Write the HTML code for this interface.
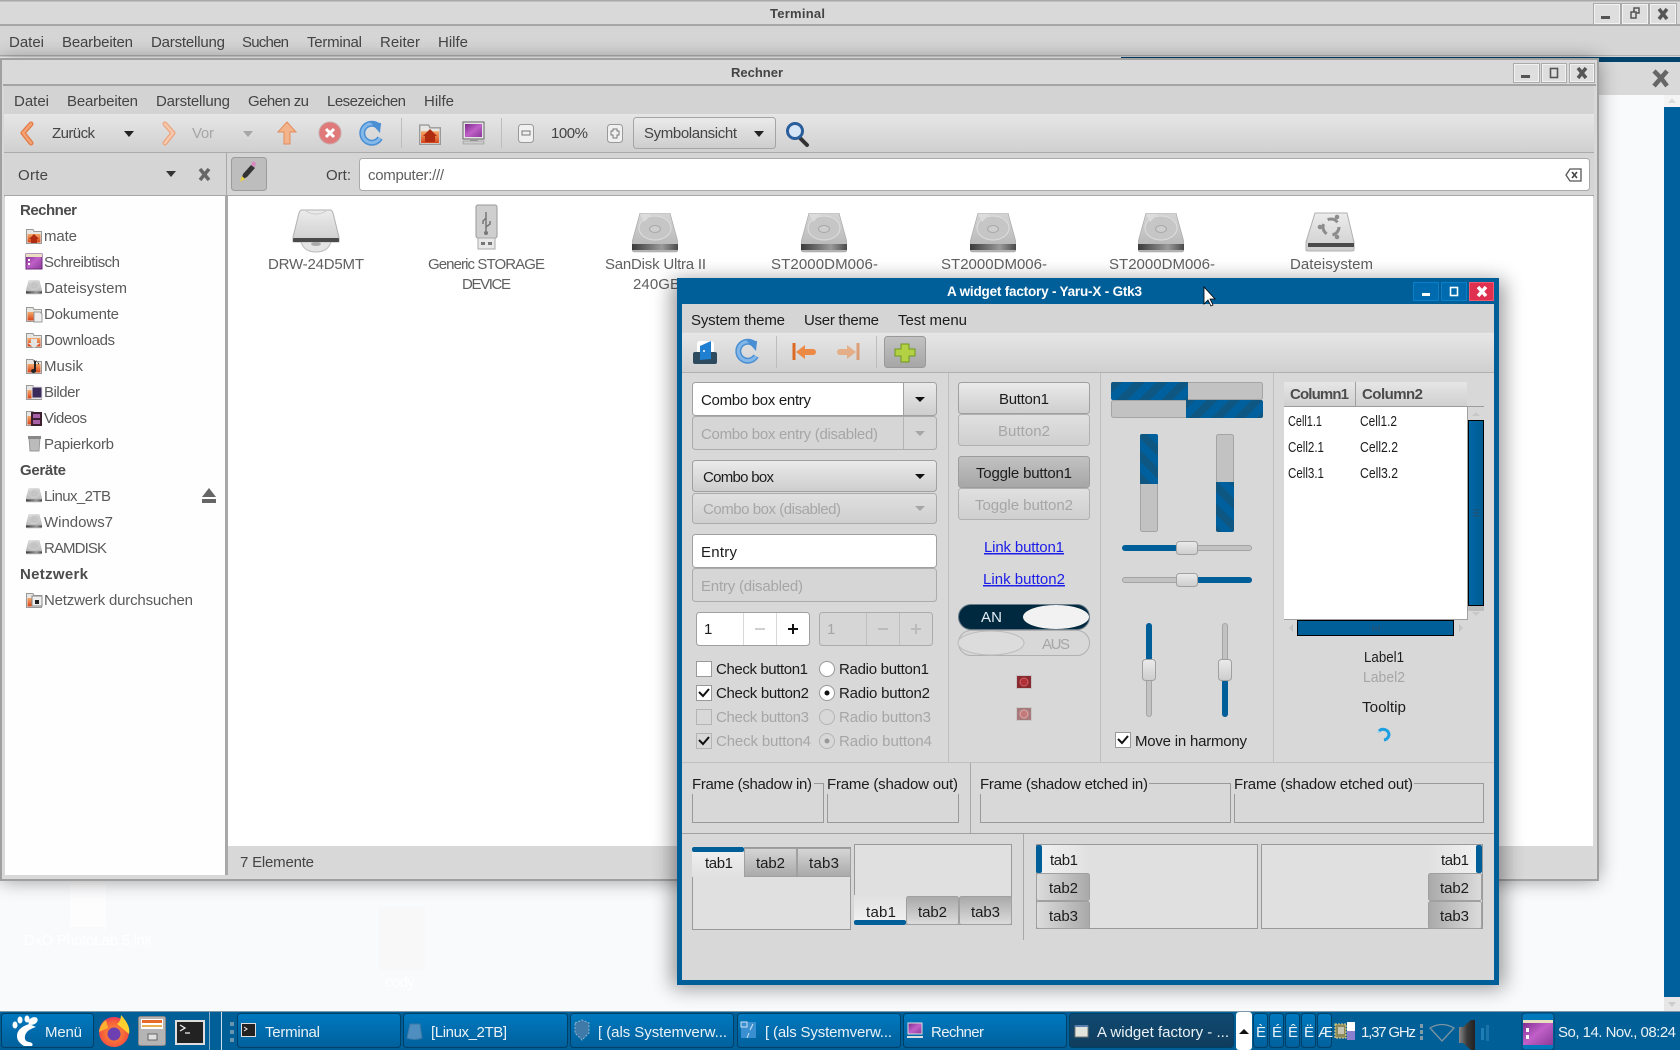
<!DOCTYPE html>
<html lang="de"><head><meta charset="utf-8"><title>A widget factory</title>
<style>
html,body{margin:0;padding:0;width:1680px;height:1050px;overflow:hidden;background:#f9fafc}
svg{display:block}
text{font-family:"Liberation Sans",sans-serif;font-size:15px;fill:#1c1c1c}
.g{fill:#444}.s{fill:#5a5a5a}.b{font-weight:bold;fill:#4c4c4c}.l{fill:#606060}
.d{fill:#a6a6a6}.t{font-weight:bold;font-size:13px;fill:#444}.w{fill:#eaf2f7}
.c{stroke:#a4a4a4;fill:none}
</style></head><body>
<svg xmlns="http://www.w3.org/2000/svg" width="1680" height="1050" viewBox="0 0 1680 1050">
<defs>
<linearGradient id="tb" x1="0" y1="0" x2="0" y2="1"><stop offset="0" stop-color="#e6e6e6"/><stop offset="1" stop-color="#d0d0d0"/></linearGradient>
<linearGradient id="bt" x1="0" y1="0" x2="0" y2="1"><stop offset="0" stop-color="#ebebeb"/><stop offset="1" stop-color="#cdcdcd"/></linearGradient>
<linearGradient id="dbt" x1="0" y1="0" x2="0" y2="1"><stop offset="0" stop-color="#e0e0e0"/><stop offset="1" stop-color="#cfcfcf"/></linearGradient>
<linearGradient id="tg" x1="0" y1="0" x2="0" y2="1"><stop offset="0" stop-color="#c2c2c2"/><stop offset="1" stop-color="#a6a6a6"/></linearGradient>
<linearGradient id="tab" x1="0" y1="0" x2="0" y2="1"><stop offset="0" stop-color="#d6d6d6"/><stop offset="1" stop-color="#a9a9a9"/></linearGradient>
<linearGradient id="tab2" x1="0" y1="0" x2="0" y2="1"><stop offset="0" stop-color="#a9a9a9"/><stop offset="1" stop-color="#dcdcdc"/></linearGradient>
<linearGradient id="tabl" x1="0" y1="0" x2="1" y2="0"><stop offset="0" stop-color="#dcdcdc"/><stop offset="1" stop-color="#a9a9a9"/></linearGradient>
<linearGradient id="tabr" x1="0" y1="0" x2="1" y2="0"><stop offset="0" stop-color="#a9a9a9"/><stop offset="1" stop-color="#dcdcdc"/></linearGradient>
<linearGradient id="act" x1="0" y1="0" x2="0" y2="1"><stop offset="0" stop-color="#f2f2f2"/><stop offset="1" stop-color="#e0e0e0"/></linearGradient>
<linearGradient id="actb" x1="0" y1="0" x2="0" y2="1"><stop offset="0" stop-color="#e0e0e0"/><stop offset="1" stop-color="#f2f2f2"/></linearGradient>
<linearGradient id="actl" x1="0" y1="0" x2="1" y2="0"><stop offset="0" stop-color="#f2f2f2"/><stop offset="1" stop-color="#e0e0e0"/></linearGradient>
<linearGradient id="actr" x1="0" y1="0" x2="1" y2="0"><stop offset="0" stop-color="#e0e0e0"/><stop offset="1" stop-color="#f2f2f2"/></linearGradient>
<linearGradient id="task" x1="0" y1="0" x2="0" y2="1"><stop offset="0" stop-color="#0079bf"/><stop offset="1" stop-color="#00609c"/></linearGradient>
<linearGradient id="taskd" x1="0" y1="0" x2="0" y2="1"><stop offset="0" stop-color="#114a72"/><stop offset="1" stop-color="#0f3c5c"/></linearGradient>
<linearGradient id="hd" x1="0" y1="0" x2="0" y2="1"><stop offset="0" stop-color="#d4d4d4"/><stop offset="1" stop-color="#b4b4b4"/></linearGradient>
<linearGradient id="hl" x1="0" y1="0" x2="0" y2="1"><stop offset="0" stop-color="#ececec"/><stop offset="1" stop-color="#cecece"/></linearGradient>
<linearGradient id="bar" x1="0" y1="0" x2="1" y2="0"><stop offset="0" stop-color="#3a3a3a"/><stop offset=".65" stop-color="#9a9a9a"/><stop offset="1" stop-color="#4a4a4a"/></linearGradient>
<linearGradient id="fo" x1="0" y1="0" x2="0" y2="1"><stop offset="0" stop-color="#f4a86a"/><stop offset="1" stop-color="#d8451a"/></linearGradient>
<linearGradient id="pu" x1="0" y1="0" x2="1" y2="1"><stop offset="0" stop-color="#7a2a8a"/><stop offset=".5" stop-color="#c060c8"/><stop offset="1" stop-color="#8a3a98"/></linearGradient>
<linearGradient id="bl" x1="0" y1="0" x2="1" y2="0"><stop offset="0" stop-color="#0067a8"/><stop offset="1" stop-color="#005c90"/></linearGradient>
<linearGradient id="sp" x1="0" y1="0" x2="1" y2="0"><stop offset="0" stop-color="#888"/><stop offset=".5" stop-color="#3a3a3a"/><stop offset="1" stop-color="#222"/></linearGradient>
<radialGradient id="ff" cx=".5" cy=".55" r=".6"><stop offset="0" stop-color="#ff9a30"/><stop offset=".7" stop-color="#f55a3c"/><stop offset="1" stop-color="#e22d6f"/></radialGradient>
<pattern id="st1" width="16" height="16" patternUnits="userSpaceOnUse" patternTransform="rotate(45)"><rect width="16" height="16" fill="#00609e"/><rect width="8" height="16" fill="#0e5783"/></pattern>
<pattern id="st2" width="16" height="16" patternUnits="userSpaceOnUse" patternTransform="rotate(-45)"><rect width="16" height="16" fill="#00609e"/><rect width="8" height="16" fill="#0e5783"/></pattern>
<filter id="sh" x="-10%" y="-10%" width="120%" height="120%"><feGaussianBlur stdDeviation="10"/></filter>
<symbol id="hdd" viewBox="0 0 46 40"><path d="M8 0H38L46 29V36Q46 39 43 39H3Q0 39 0 36V29Z" fill="url(#hd)" stroke="#a4a4a4" stroke-width=".6"/><ellipse cx="23" cy="15" rx="16" ry="12" fill="#c6c6c6" stroke="#dedede"/><ellipse cx="23" cy="16" rx="5.500" ry="3.500" fill="#cecece" stroke="#a8a8a8"/><path d="M8 1L20 1L12 9z" fill="#dcdcdc"/><rect x="0" y="31" width="46" height="6" fill="url(#bar)"/></symbol>
<symbol id="fold" viewBox="0 0 16 16"><path d="M.5 1.500H7L8 3.500H15.500V15.500H.5Z" fill="#e8e6e2" stroke="#999"/><path d="M1.500 6H14.500V14.500H1.500Z" fill="url(#fo)"/></symbol>
</defs>

<!-- desktop -->
<rect width="1680" height="1050" fill="#f9fafc"/>
<rect x="70" y="883" width="36" height="44" fill="#fdfdfe"/>
<text x="24" y="945" textLength="128" style="fill:#fff">DxO PhotoLab 5.lnk</text>
<rect x="379" y="907" width="46" height="63" fill="#f8f8f8"/>
<text x="385" y="987" textLength="30" style="fill:#fff">cody</text>

<!-- terminal window -->
<rect y="0" width="1680" height="24" fill="#d9d9d9"/><rect width="1680" height="1.500" fill="#a8a8a8"/>
<rect y="24" width="1680" height="2" fill="#a6a6a6"/>
<rect y="26" width="1680" height="30" fill="#d5d5d5"/>
<rect y="55" width="1680" height="1.500" fill="#b0b0b0"/>
<rect x="1121" y="57" width="559" height="5" fill="#00446e"/>
<rect x="1598" y="62" width="82" height="33" fill="#d9d9d9"/>
<rect x="1598" y="95" width="66" height="915" fill="#f9fafc"/>
<rect x="1664" y="95" width="16" height="12" fill="#f4f4f4"/><path d="M1668 103l4-5 4 5z" fill="#ddd"/>
<rect x="1664" y="107" width="16" height="890" fill="#00609e"/>
<rect x="1664" y="997" width="16" height="14" fill="#e6e6e6"/><path d="M1668 1002l4 5 4-5z" fill="#ccc"/>
<path d="M1654 71l7 7m6-7l-6 7m0 0l-7 8m7-8l6 8" stroke="#666" stroke-width="4.500" fill="none"/>
<text class="t" x="770" y="18" textLength="55">Terminal</text>
<rect x="1594.500" y="4.500" width="25" height="19" fill="#dedede" stroke="#f2f2f2"/><rect x="1593.500" y="3.500" width="27" height="21" fill="none" stroke="#aaa"/><rect x="1601" y="16" width="9" height="3" fill="#555"/>
<rect x="1622.500" y="4.500" width="25" height="19" fill="#dedede" stroke="#f2f2f2"/><rect x="1621.500" y="3.500" width="27" height="21" fill="none" stroke="#aaa"/><path d="M1633 11h1v-3h5v5h-3M1631 12h5v6h-5z" fill="none" stroke="#555" stroke-width="1.500"/>
<rect x="1650.500" y="4.500" width="25" height="19" fill="#dedede" stroke="#f2f2f2"/><rect x="1649.500" y="3.500" width="27" height="21" fill="none" stroke="#aaa"/><path d="M1659 9l8 10m0-10l-8 10" stroke="#555" stroke-width="3.500"/>
<text class="g" x="9" y="47" textLength="35">Datei</text><text class="g" x="62" y="47" textLength="71">Bearbeiten</text><text class="g" x="151" y="47" textLength="74">Darstellung</text><text class="g" x="242" y="47" textLength="47">Suchen</text><text class="g" x="307" y="47" textLength="55">Terminal</text><text class="g" x="380" y="47" textLength="40">Reiter</text><text class="g" x="438" y="47" textLength="30">Hilfe</text>

<!-- Rechner window -->
<rect x="0" y="60" width="1598" height="820" fill="#000" opacity=".42" filter="url(#sh)"/>
<rect x="1" y="59" width="1597" height="821" fill="#d9d9d9" stroke="#a0a0a0" stroke-width="2"/>
<rect x="3" y="84" width="1593" height="2" fill="#a4a4a4"/>
<rect x="3" y="60" width="1593" height="24" fill="#d9d9d9"/>
<text class="t" x="731" y="77" textLength="52">Rechner</text>
<rect x="1514.500" y="64.500" width="24" height="17" fill="#dedede" stroke="#f2f2f2"/><rect x="1513.500" y="63.500" width="26" height="19" fill="none" stroke="#aaa"/><rect x="1521" y="75" width="9" height="3" fill="#555"/>
<rect x="1542.500" y="64.500" width="23" height="17" fill="#dedede" stroke="#f2f2f2"/><rect x="1541.500" y="63.500" width="25" height="19" fill="none" stroke="#aaa"/><rect x="1550.500" y="68.500" width="7" height="9" fill="none" stroke="#555" stroke-width="1.600"/>
<rect x="1570.500" y="64.500" width="23" height="17" fill="#dedede" stroke="#f2f2f2"/><rect x="1569.500" y="63.500" width="25" height="19" fill="none" stroke="#aaa"/><path d="M1578 68l8 10m0-10l-8 10" stroke="#555" stroke-width="3.500"/>

<rect x="4" y="86" width="1590" height="28" fill="#d3d3d3"/>
<text class="g" x="14" y="106" textLength="35">Datei</text><text class="g" x="67" y="106" textLength="71">Bearbeiten</text><text class="g" x="156" y="106" textLength="74">Darstellung</text><text class="g" x="248" y="106" textLength="61">Gehen zu</text><text class="g" x="327" y="106" textLength="79">Lesezeichen</text><text class="g" x="424" y="106" textLength="30">Hilfe</text>
<rect x="4" y="114" width="1590" height="38" fill="url(#tb)"/><rect x="4" y="152" width="1590" height="1" fill="#ababab"/>
<!-- toolbar icons -->
<path d="M31 124L23 133L31 143" fill="none" stroke="#e07a45" stroke-width="5" stroke-linecap="round" stroke-linejoin="round"/><path d="M31 124L23 133L31 143" fill="none" stroke="#f4a274" stroke-width="2.500" stroke-linecap="round" stroke-linejoin="round"/>
<text class="g" x="52" y="138" textLength="43">Zurück</text><path d="M124 131h10l-5 6z" fill="#222"/>
<path d="M165 124L173 133L165 143" fill="none" stroke="#eba47f" stroke-width="5" stroke-linecap="round" stroke-linejoin="round"/><path d="M165 124L173 133L165 143" fill="none" stroke="#f6c8ac" stroke-width="2.500" stroke-linecap="round" stroke-linejoin="round"/>
<text class="d" x="192" y="138" textLength="22">Vor</text><path d="M243 131h10l-5 6z" fill="#a6a6a6"/>
<path d="M287 122l9 10h-6v12h-6v-12h-6z" fill="#f3b48c" stroke="#e38d5c"/>
<circle cx="330" cy="133" r="11" fill="#e07a7a" stroke="#c9aaaa"/><path d="M326 129l8 8m0-8l-8 8" stroke="#fff" stroke-width="3"/>
<path d="M379 127a9.500 9.500 0 1 0 1 11" fill="none" stroke="#4a8fd4" stroke-width="6"/><path d="M379 127a9.500 9.500 0 1 0 1 11" fill="none" stroke="#84b8e8" stroke-width="3"/><path d="M370 122l11 1-1 10z" fill="#4a8fd4"/>
<rect x="401" y="118" width="1" height="30" fill="#bdbdbd"/>
<use href="#fold" x="418" y="123" width="24" height="22"/><path d="M430 129l7 7h-2v6h-10v-6h-2z" fill="#b02c10"/>
<rect x="463" y="122" width="21" height="17" fill="#e4e4e4" stroke="#666"/><rect x="465" y="124" width="17" height="13" fill="url(#pu)"/><rect x="470" y="139" width="8" height="2" fill="#999"/><rect x="463" y="141" width="21" height="3" fill="#ccc" stroke="#888" stroke-width=".5"/>
<rect x="501" y="118" width="1" height="30" fill="#bdbdbd"/>
<rect x="518.500" y="124.500" width="15" height="18" rx="3" fill="#f0f0f0" stroke="#999"/><rect x="522" y="131" width="8" height="4" fill="none" stroke="#777"/>
<text class="g" x="551" y="138" textLength="37">100%</text>
<rect x="607.500" y="124.500" width="15" height="18" rx="3" fill="#f0f0f0" stroke="#999"/><path d="M613 129h4v2h2v4h-2v3h-4v-3h-2v-4h2z" fill="none" stroke="#777"/>
<rect x="633.500" y="117.500" width="142" height="31" rx="3" fill="url(#bt)" stroke="#a4a4a4"/>
<text class="g" x="644" y="138" textLength="93">Symbolansicht</text><path d="M754 131h10l-5 6z" fill="#222"/>
<path d="M800 138l7 7" stroke="#333" stroke-width="4" stroke-linecap="round"/><circle cx="795" cy="131" r="7.500" fill="#d6e6f6" stroke="#2a5f9c" stroke-width="3"/>

<rect x="4" y="153" width="1590" height="42" fill="#d5d5d5"/><rect x="4" y="195" width="1590" height="1.500" fill="#a8a8a8"/>
<rect x="226" y="153" width="1" height="42" fill="#a8a8a8"/>
<text class="g" x="18" y="180" textLength="30">Orte</text><path d="M166 171h10l-5 6z" fill="#333"/>
<path d="M200 169l9 11m0-11l-9 11" stroke="#666" stroke-width="3.500"/>
<rect x="231.500" y="157.500" width="35" height="33" rx="3" fill="#bdbdbd" stroke="#9c9c9c"/>
<path d="M241 180l2-6 8-9 4 3-8 9z" fill="#333"/><path d="M251 165l2-4 3 2-1 4z" fill="#d888c0"/><path d="M240 182l2-6 3 3z" fill="#e8d040"/>
<text class="g" x="326" y="180" textLength="25">Ort:</text>
<rect x="359.500" y="158.500" width="1230" height="32" rx="3" fill="#fff" stroke="#aaa"/>
<text class="l" x="368" y="180" textLength="76">computer:///</text>
<path d="M1566 175l4-6h11v12h-11z" fill="#fff" stroke="#555" stroke-width="1.300"/><path d="M1572 172l5 6m0-6l-5 6" stroke="#444" stroke-width="1.600"/>

<rect x="5" y="196" width="220" height="679" fill="#fefefe"/>
<rect x="225" y="196" width="3" height="679" fill="#a8a8a8"/>
<rect x="228" y="196" width="1365" height="650" fill="#fff"/>
<rect x="228" y="846" width="1365" height="30" fill="#d8d8d8"/>
<text class="g" x="240" y="867" textLength="74">7 Elemente</text>
<!-- sidebar -->
<text class="b" x="20" y="215" textLength="57">Rechner</text>
<text class="s" x="44" y="241" textLength="33">mate</text>
<text class="s" x="44" y="267" textLength="76">Schreibtisch</text>
<text class="s" x="44" y="293" textLength="83">Dateisystem</text>
<text class="s" x="44" y="319" textLength="75">Dokumente</text>
<text class="s" x="44" y="345" textLength="71">Downloads</text>
<text class="s" x="44" y="371" textLength="39">Musik</text>
<text class="s" x="44" y="397" textLength="36">Bilder</text>
<text class="s" x="44" y="423" textLength="43">Videos</text>
<text class="s" x="44" y="449" textLength="70">Papierkorb</text>
<text class="b" x="20" y="475" textLength="46">Geräte</text>
<text class="s" x="44" y="501" textLength="67">Linux_2TB</text>
<text class="s" x="44" y="527" textLength="69">Windows7</text>
<text class="s" x="44" y="553" textLength="63">RAMDISK</text>
<text class="b" x="20" y="579" textLength="68">Netzwerk</text>
<text class="s" x="44" y="605" textLength="149">Netzwerk durchsuchen</text>
<use href="#fold" x="26" y="228" width="16" height="16"/><path d="M34 234l5 5h-2v4h-6v-4h-2z" fill="#b02c10"/>
<rect x="26" y="254" width="16" height="15" fill="url(#pu)" stroke="#6a2a7a"/><rect x="26" y="254" width="16" height="3" fill="#e8e0c0"/><rect x="28" y="259" width="2" height="2" fill="#fff"/><rect x="28" y="263" width="2" height="2" fill="#fff"/>
<use href="#hdd" x="26" y="280" width="16" height="15"/>
<use href="#fold" x="26" y="306" width="16" height="16"/><path d="M34 312h6l2 2v8h-8z" fill="#eee" stroke="#999"/>
<use href="#fold" x="26" y="332" width="16" height="16"/><path d="M31 339h6v4h3l-6 5-6-5h3z" fill="#e4e4e4"/>
<use href="#fold" x="26" y="358" width="16" height="16"/><path d="M36 360v11a2.500 2 0 1 1-2-2v-9l5 3v2z" fill="#222"/>
<use href="#fold" x="26" y="384" width="16" height="16"/><rect x="32" y="387" width="10" height="11" fill="#3a2a5a" stroke="#ddd"/>
<use href="#fold" x="26" y="410" width="16" height="16"/><rect x="31" y="412" width="11" height="14" fill="#3c2030"/><rect x="33" y="414" width="7" height="4" fill="#a860a8"/><rect x="33" y="420" width="7" height="4" fill="#a860a8"/>
<path d="M29 437h11l-1 14h-9z" fill="#bbb" stroke="#999"/><rect x="28" y="436" width="13" height="3" fill="#888"/>
<use href="#hdd" x="26" y="488" width="16" height="15"/><use href="#hdd" x="26" y="514" width="16" height="15"/><use href="#hdd" x="26" y="540" width="16" height="15"/>
<use href="#fold" x="26" y="592" width="16" height="16"/><rect x="32" y="596" width="10" height="10" fill="#eee" stroke="#888"/><rect x="35" y="600" width="4" height="4" fill="#222"/>
<path d="M209 488l7 9h-14z" fill="#666"/><rect x="202" y="499" width="14" height="4" fill="#666"/>
<!-- main icons -->
<path d="M302 210h28q2 0 3 3l6 24v5h-46v-5l6-24q1-3 3-3z" fill="url(#hl)" stroke="#b0b0b0"/><path d="M306 211q10 6 20 0" fill="none" stroke="#c8c8c8"/><path d="M301 242h30q-3 10-15 10t-15-10z" fill="#e4e4e4" stroke="#bbb"/><rect x="293" y="238" width="46" height="4" rx="1" fill="#4a4a4a"/><ellipse cx="316" cy="244" rx="5" ry="2" fill="#aaa"/>
<rect x="476" y="205" width="21" height="33" rx="2" fill="#cfcfcf" stroke="#9a9a9a"/><path d="M486 212v19m0-13l-3 3v3m3 3l4-3v-3" fill="none" stroke="#777" stroke-width="1.500"/><circle cx="486" cy="233" r="2" fill="#777"/><rect x="478" y="238" width="17" height="11" fill="#e8e8e8" stroke="#aaa"/><rect x="481" y="242" width="4" height="3" fill="#777"/><rect x="488" y="242" width="4" height="3" fill="#777"/>
<use href="#hdd" x="632" y="213" width="46" height="40"/><use href="#hdd" x="801" y="213" width="46" height="40"/><use href="#hdd" x="970" y="213" width="46" height="40"/><use href="#hdd" x="1138" y="213" width="46" height="40"/>
<path d="M1315 213h32l7 29v8q0 1-2 1h-44q-2 0-2-1v-8z" fill="url(#hl)" stroke="#b0b0b0"/><rect x="1308" y="243" width="46" height="4" fill="#4a4a4a"/><circle cx="1331" cy="227" r="8" fill="none" stroke="#8c8c8c" stroke-width="3" stroke-dasharray="11 6"/><circle cx="1320" cy="227" r="2.300" fill="#8c8c8c"/><circle cx="1337" cy="217" r="2.300" fill="#8c8c8c"/><circle cx="1337" cy="237" r="2.300" fill="#8c8c8c"/>
<text class="l" x="268" y="269" textLength="96">DRW-24D5MT</text>
<text class="l" x="428" y="269" textLength="117">Generic STORAGE</text><text class="l" x="462" y="289" textLength="49">DEVICE</text>
<text class="l" x="605" y="269" textLength="101">SanDisk Ultra II</text><text class="l" x="633" y="289" textLength="47">240GB</text>
<text class="l" x="771" y="269" textLength="107">ST2000DM006-</text><text class="l" x="941" y="269" textLength="106">ST2000DM006-</text><text class="l" x="1109" y="269" textLength="106">ST2000DM006-</text><text class="l" x="1290" y="269" textLength="83">Dateisystem</text>

<!-- widget factory window -->
<rect x="672" y="280" width="832" height="708" fill="#000" opacity=".4" filter="url(#sh)"/>
<rect x="677" y="278" width="822" height="707" fill="#005f98"/><rect x="682" y="304" width="812" height="676" fill="#d8d8d8"/>
<text x="947" y="296" textLength="195" style="fill:#fff;font-size:13.5px;font-weight:bold">A widget factory - Yaru-X - Gtk3</text>
<rect x="1413.500" y="282.500" width="25" height="18" fill="#006aae" stroke="#0a7ec6"/><rect x="1422" y="293" width="8" height="3" fill="#fff"/>
<rect x="1441.500" y="282.500" width="25" height="18" fill="#006aae" stroke="#0a7ec6"/><rect x="1450.500" y="287.500" width="7" height="8" fill="none" stroke="#fff" stroke-width="1.600"/>
<rect x="1469.500" y="282.500" width="24" height="18" fill="#e0304f" stroke="#ee5a72"/><path d="M1478 287l8 9m0-9l-8 9" stroke="#fff" stroke-width="3.500"/>
<rect x="682" y="304" width="812" height="28" fill="#d5d5d5"/>
<text x="691" y="325" textLength="94">System theme</text><text x="804" y="325" textLength="75">User theme</text><text x="898" y="325" textLength="69">Test menu</text>
<rect x="682" y="333" width="812" height="39" fill="url(#tb)"/><rect x="682" y="372" width="812" height="1" fill="#b0b0b0"/>
<!-- w toolbar icons -->
<rect x="697" y="341" width="17" height="16" rx="3" fill="#fff"/><rect x="693" y="352" width="24" height="12" rx="2" fill="#2e4a5e"/><path d="M700 346l11-5v18l-11 1z" fill="#1f7fd0"/><circle cx="704" cy="351" r="1" fill="#fff"/><rect x="696" y="350" width="18" height="2" fill="#2e4a5e" opacity="0"/>
<path d="M755 345a9.500 9.500 0 1 0 1 11" fill="none" stroke="#4a8fd4" stroke-width="6"/><path d="M755 345a9.500 9.500 0 1 0 1 11" fill="none" stroke="#84b8e8" stroke-width="3"/><path d="M746 340l11 1-1 10z" fill="#4a8fd4"/>
<rect x="776" y="336" width="1" height="32" fill="#bdbdbd"/>
<path d="M794 343v17" fill="none" stroke="#dc6a25" stroke-width="3"/><path d="M796 352l9-7v14z" fill="#ec8a45"/><rect x="803" y="349" width="13" height="6" rx="3" fill="#ec8a45"/>
<g opacity=".55"><path d="M858 343v17" stroke="#dc6a25" stroke-width="3"/><path d="M856 352l-9-7v14z" fill="#ec8a45"/><rect x="837" y="349" width="13" height="6" rx="3" fill="#ec8a45"/></g>
<rect x="876" y="336" width="1" height="32" fill="#bdbdbd"/>
<rect x="884.500" y="336.500" width="41" height="31" rx="3" fill="url(#tg)" stroke="#999"/>
<path d="M901 344h8v5h6v7h-6v6h-8v-6h-6v-7h6z" fill="#b4d044" stroke="#6f9a1c"/>
<rect x="948" y="373" width="1" height="389" fill="#bfbfbf"/><rect x="1100" y="373" width="1" height="389" fill="#bfbfbf"/><rect x="1273" y="373" width="1" height="389" fill="#bfbfbf"/>
<!-- column 1 -->
<rect x="692.500" y="382.500" width="244" height="33" rx="3" fill="url(#bt)" stroke="#a0a0a0"/>
<path d="M693 386q0-3 3-3h207v32h-207q-3 0-3-3z" fill="#fff"/><rect x="903" y="383" width="1" height="32" fill="#a0a0a0"/>
<text x="701" y="405" textLength="110">Combo box entry</text><path d="M915 397h10l-5 5z" fill="#111"/>
<rect x="692.500" y="416.500" width="244" height="33" rx="3" fill="#d6d6d6" stroke="#ababab"/><rect x="903" y="417" width="1" height="32" fill="#b4b4b4"/>
<text class="d" x="701" y="439" textLength="177">Combo box entry (disabled)</text><path d="M915 431h10l-5 5z" fill="#a6a6a6"/>
<rect x="692.500" y="460.500" width="244" height="31" rx="3" fill="url(#bt)" stroke="#a0a0a0"/>
<text x="703" y="482" textLength="71">Combo box</text><path d="M915 474h10l-5 5z" fill="#111"/>
<rect x="692.500" y="493.500" width="244" height="30" rx="3" fill="url(#dbt)" stroke="#ababab"/>
<text class="d" x="703" y="514" textLength="138">Combo box (disabled)</text><path d="M915 506h10l-5 5z" fill="#a6a6a6"/>
<rect x="692.500" y="534.500" width="244" height="33" rx="3" fill="#fff" stroke="#a0a0a0"/><text x="701" y="557" textLength="36">Entry</text>
<rect x="692.500" y="568.500" width="244" height="33" rx="3" fill="#d6d6d6" stroke="#ababab"/><text class="d" x="701" y="591" textLength="102">Entry (disabled)</text>
<rect x="696.500" y="612.500" width="113" height="33" rx="3" fill="#fff" stroke="#a0a0a0"/><rect x="743" y="613" width="1" height="32" fill="#d8d8d8"/><rect x="776" y="613" width="1" height="32" fill="#d8d8d8"/>
<text x="704" y="634">1</text><rect x="755" y="628" width="10" height="2" fill="#cfcfcf"/><path d="M788 628h10v2h-10zM792 624h2v10h-2z" fill="#111"/>
<rect x="819.500" y="612.500" width="113" height="33" rx="3" fill="#d6d6d6" stroke="#ababab"/><rect x="866" y="613" width="1" height="32" fill="#bfbfbf"/><rect x="899" y="613" width="1" height="32" fill="#bfbfbf"/>
<text class="d" x="827" y="634">1</text><rect x="878" y="628" width="10" height="2" fill="#bbb"/><path d="M911 628h10v2h-10zM915 624h2v10h-2z" fill="#bbb"/>
<rect x="696.500" y="661.500" width="15" height="15" fill="#fff" stroke="#999"/>
<rect x="696.500" y="685.500" width="15" height="15" fill="#fff" stroke="#999"/><path d="M699 692l4 4 6-7" fill="none" stroke="#111" stroke-width="2"/>
<rect x="696.500" y="709.500" width="15" height="15" fill="none" stroke="#b4b4b4"/>
<rect x="696.500" y="733.500" width="15" height="15" fill="#d8d8d8" stroke="#b4b4b4"/><path d="M699 740l4 4 6-7" fill="none" stroke="#111" stroke-width="2"/>
<text x="716" y="674" textLength="92">Check button1</text><text x="716" y="698" textLength="93">Check button2</text><text class="d" x="716" y="722" textLength="93">Check button3</text><text class="d" x="716" y="746" textLength="95">Check button4</text>
<circle cx="827" cy="669" r="7.500" fill="#fff" stroke="#999"/><circle cx="827" cy="693" r="7.500" fill="#fff" stroke="#999"/><circle cx="827" cy="693" r="2.500" fill="#111"/><circle cx="827" cy="717" r="7.500" fill="none" stroke="#b4b4b4"/><circle cx="827" cy="741" r="7.500" fill="none" stroke="#b4b4b4"/><circle cx="827" cy="741" r="2.500" fill="#999"/>
<text x="839" y="674" textLength="90">Radio button1</text><text x="839" y="698" textLength="91">Radio button2</text><text class="d" x="839" y="722" textLength="92">Radio button3</text><text class="d" x="839" y="746" textLength="93">Radio button4</text>
<!-- column 2 -->
<rect x="958.500" y="382.500" width="131" height="31" rx="3" fill="url(#bt)" stroke="#a0a0a0"/><text x="999" y="404" textLength="50">Button1</text>
<rect x="958.500" y="414.500" width="131" height="31" rx="3" fill="url(#dbt)" stroke="#b0b0b0"/><text class="d" x="998" y="436" textLength="52">Button2</text>
<rect x="958.500" y="456.500" width="131" height="31" rx="3" fill="url(#tg)" stroke="#9c9c9c"/><text x="976" y="478" textLength="96">Toggle button1</text>
<rect x="958.500" y="488.500" width="131" height="31" rx="3" fill="url(#dbt)" stroke="#b0b0b0"/><text class="d" x="975" y="510" textLength="98">Toggle button2</text>
<text x="984" y="552" textLength="80" style="fill:#1c1ce8;text-decoration:underline">Link button1</text>
<text x="983" y="584" textLength="82" style="fill:#1c1ce8;text-decoration:underline">Link button2</text>
<rect x="958.500" y="604.500" width="131" height="25" rx="12.500" fill="#00283f" stroke="#6a7a86"/><ellipse cx="1056" cy="617" rx="33" ry="12" fill="#f2f2f2"/><text x="981" y="622" textLength="21" style="fill:#e4eef4">AN</text>
<rect x="958.500" y="630.500" width="131" height="25" rx="12.500" fill="#d8d8d8" stroke="#b0b0b0"/><ellipse cx="991" cy="643" rx="33" ry="12" fill="#dcdcdc" stroke="#bcbcbc"/><text class="d" x="1042" y="649" textLength="28">AUS</text>
<rect x="1016.500" y="675.500" width="15" height="13" fill="#8a2a30" stroke="#c4c4c4"/><circle cx="1024" cy="682" r="4" fill="#b03038" stroke="#d06060"/>
<rect x="1016.500" y="707.500" width="15" height="13" fill="#a87a7c" stroke="#c8c8c8"/><circle cx="1024" cy="714" r="4" fill="#c47a7a" stroke="#dcaaaa"/>
<!-- column 3 -->
<rect x="1111.500" y="382.500" width="151" height="17" rx="2" fill="#c2c2c2" stroke="#a4a4a4"/><path d="M1111 384q0-2 2-2h75v18h-75q-2 0-2-2z" fill="url(#st1)"/>
<rect x="1111.500" y="400.500" width="151" height="17" rx="2" fill="#c2c2c2" stroke="#a4a4a4"/><path d="M1186 400h75q2 0 2 2v14q0 2-2 2h-75z" fill="url(#st1)"/>
<rect x="1140.500" y="434.500" width="17" height="97" rx="2" fill="#c2c2c2" stroke="#a4a4a4"/><path d="M1140 436q0-2 2-2h14q2 0 2 2v48h-18z" fill="url(#st2)"/>
<rect x="1216.500" y="434.500" width="17" height="97" rx="2" fill="#c2c2c2" stroke="#a4a4a4"/><path d="M1216 482h18v48q0 2-2 2h-14q-2 0-2-2z" fill="url(#st2)"/>
<rect x="1122.500" y="545.500" width="129" height="5" rx="2.500" fill="#c2c2c2" stroke="#a4a4a4"/><rect x="1122" y="545" width="56" height="6" rx="3" fill="#005f98"/>
<rect x="1176.500" y="541.500" width="21" height="13" rx="3" fill="url(#bt)" stroke="#a0a0a0"/>
<rect x="1122.500" y="577.500" width="129" height="5" rx="2.500" fill="#c2c2c2" stroke="#a4a4a4"/><rect x="1196" y="577" width="56" height="6" rx="3" fill="#005f98"/>
<rect x="1176.500" y="573.500" width="21" height="13" rx="3" fill="url(#bt)" stroke="#a0a0a0"/>
<rect x="1146.500" y="623.500" width="5" height="93" rx="2.500" fill="#c2c2c2" stroke="#a4a4a4"/><rect x="1146" y="623" width="6" height="38" rx="3" fill="#005f98"/>
<rect x="1142.500" y="659.500" width="13" height="21" rx="3" fill="url(#bt)" stroke="#a0a0a0"/>
<rect x="1222.500" y="623.500" width="5" height="93" rx="2.500" fill="#c2c2c2" stroke="#a4a4a4"/><rect x="1222" y="679" width="6" height="38" rx="3" fill="#005f98"/>
<rect x="1218.500" y="659.500" width="13" height="21" rx="3" fill="url(#bt)" stroke="#a0a0a0"/>
<rect x="1115.500" y="732.500" width="15" height="15" fill="#fff" stroke="#999"/><path d="M1118 739l4 4 6-7" fill="none" stroke="#111" stroke-width="2"/>
<text x="1135" y="746" textLength="112">Move in harmony</text>
<!-- column 4 -->
<rect x="1284" y="382" width="183" height="24" fill="url(#tb)"/><rect x="1284" y="406" width="200" height="1" fill="#9c9c9c"/><rect x="1355" y="382" width="1" height="24" fill="#a0a0a0"/>
<text class="b" x="1290" y="399" textLength="59">Column1</text><text class="b" x="1362" y="399" textLength="61">Column2</text>
<rect x="1284" y="407" width="183" height="212" fill="#fff"/><rect x="1284" y="619" width="184" height="1" fill="#a0a0a0"/><rect x="1467" y="407" width="1" height="213" fill="#a0a0a0"/>
<text x="1288" y="426" textLength="34" lengthAdjust="spacingAndGlyphs">Cell1.1</text><text x="1360" y="426" textLength="37" lengthAdjust="spacingAndGlyphs">Cell1.2</text><text x="1288" y="452" textLength="36" lengthAdjust="spacingAndGlyphs">Cell2.1</text><text x="1360" y="452" textLength="38" lengthAdjust="spacingAndGlyphs">Cell2.2</text><text x="1288" y="478" textLength="36" lengthAdjust="spacingAndGlyphs">Cell3.1</text><text x="1360" y="478" textLength="38" lengthAdjust="spacingAndGlyphs">Cell3.2</text>
<path d="M1472 416l4-4 4 4z" fill="#c8c8c8"/>
<rect x="1468.500" y="420.500" width="15" height="185" fill="url(#bl)" stroke="#000"/><path d="M1473 510h6M1473 513h6M1473 516h6" stroke="#2c4e68"/>
<rect x="1468" y="606" width="16" height="5" fill="#bdbdbd"/><path d="M1472 612l4 4 4-4z" fill="#c8c8c8"/>
<path d="M1293 624l-4 4 4 4z" fill="#c4c4c4"/><path d="M1459 624l4 4-4 4z" fill="#c4c4c4"/>
<rect x="1297.500" y="620.500" width="156" height="15" fill="#005f98" stroke="#000"/><path d="M1373 626v5M1376 626v5M1379 626v5" stroke="#2c4e68"/>
<text x="1364" y="662" textLength="40" lengthAdjust="spacingAndGlyphs">Label1</text><text class="d" x="1363" y="682" textLength="42" lengthAdjust="spacingAndGlyphs">Label2</text><text x="1362" y="712" textLength="44" lengthAdjust="spacingAndGlyphs">Tooltip</text>
<path d="M1379 731a6 6 0 0 1 10 3a6 6 0 0 1-5 6" fill="none" stroke="#1c9fe0" stroke-width="3"/><path d="M1379 731a6 6 0 0 0-1 2" fill="none" stroke="#a8d4ec" stroke-width="2.500"/>
<!-- frames row -->
<rect x="682" y="762" width="812" height="1" fill="#bfbfbf"/><rect x="970" y="763" width="1" height="70" fill="#a8a8a8"/>
<rect x="682" y="833" width="812" height="1" fill="#a0a0a0"/><rect x="1023" y="834" width="1" height="106" fill="#a8a8a8"/>
<rect x="692.500" y="783.500" width="131" height="39" class="c" style="stroke:#999"/><rect x="690" y="774" width="124" height="20" fill="#d8d8d8"/>
<rect x="827.500" y="783.500" width="131" height="39" class="c" style="stroke:#999"/><rect x="825" y="774" width="135" height="20" fill="#d8d8d8"/>
<rect x="980.500" y="783.500" width="250" height="39" class="c" style="stroke:#999"/><rect x="978" y="774" width="171" height="20" fill="#d8d8d8"/>
<rect x="1234.500" y="783.500" width="249" height="39" class="c" style="stroke:#999"/><rect x="1232" y="774" width="182" height="20" fill="#d8d8d8"/>
<text x="692" y="789" textLength="120">Frame (shadow in)</text><text x="827" y="789" textLength="131">Frame (shadow out)</text><text x="980" y="789" textLength="168">Frame (shadow etched in)</text><text x="1234" y="789" textLength="179">Frame (shadow etched out)</text>
<!-- tabs top -->
<rect x="692.500" y="847.500" width="158" height="82" fill="#e0e0e0" stroke="#999"/>
<rect x="692" y="847" width="52" height="30" fill="url(#act)"/><rect x="692" y="847" width="52" height="5" rx="2" fill="#005f98"/>
<rect x="744.500" y="848.500" width="52" height="28" fill="url(#tab)" stroke="#a0a0a0"/><rect x="797.500" y="848.500" width="53" height="28" fill="url(#tab)" stroke="#a0a0a0"/>
<text x="705" y="868" textLength="28">tab1</text><text x="756" y="868" textLength="29">tab2</text><text x="809" y="868" textLength="30">tab3</text>
<!-- tabs bottom -->
<rect x="854.500" y="844.500" width="157" height="80" fill="#e0e0e0" stroke="#999"/>
<rect x="854" y="895" width="52" height="30" fill="url(#actb)"/><rect x="854" y="920" width="52" height="5" rx="2" fill="#005f98"/>
<rect x="906.500" y="896.500" width="52" height="28" rx="2" fill="url(#tab2)" stroke="#a0a0a0"/><rect x="959.500" y="896.500" width="52" height="28" rx="2" fill="url(#tab2)" stroke="#a0a0a0"/>
<text x="866" y="917" textLength="30">tab1</text><text x="918" y="917" textLength="29">tab2</text><text x="971" y="917" textLength="29">tab3</text>
<!-- tabs left -->
<rect x="1036.500" y="844.500" width="221" height="84" fill="#e0e0e0" stroke="#999"/>
<rect x="1037" y="845" width="54" height="28" fill="url(#actl)"/><rect x="1036" y="845" width="6" height="28" rx="2" fill="#005f98"/>
<rect x="1036.500" y="873.500" width="53" height="27" rx="2" fill="url(#tabl)" stroke="#a0a0a0"/><rect x="1036.500" y="901.500" width="53" height="27" rx="2" fill="url(#tabl)" stroke="#a0a0a0"/>
<text x="1050" y="865" textLength="28">tab1</text><text x="1049" y="893" textLength="29">tab2</text><text x="1049" y="921" textLength="29">tab3</text>
<!-- tabs right -->
<rect x="1261.500" y="844.500" width="221" height="84" fill="#e0e0e0" stroke="#999"/>
<rect x="1427" y="845" width="55" height="28" fill="url(#actr)"/><rect x="1476" y="845" width="6" height="28" rx="2" fill="#005f98"/>
<rect x="1428.500" y="873.500" width="53" height="27" rx="2" fill="url(#tabr)" stroke="#a0a0a0"/><rect x="1428.500" y="901.500" width="53" height="27" rx="2" fill="url(#tabr)" stroke="#a0a0a0"/>
<text x="1441" y="865" textLength="28">tab1</text><text x="1440" y="893" textLength="29">tab2</text><text x="1440" y="921" textLength="29">tab3</text>
<!-- cursor -->
<path d="M1204 287v17l4-4 3 6 2-1-3-6h5z" fill="#fff" stroke="#000" stroke-width=".8"/>

<!-- taskbar -->
<rect y="1011" width="1680" height="39" fill="#005f96"/><rect y="1011" width="1680" height="1" fill="#7d97a8"/>
<rect x="1.500" y="1013.500" width="92" height="34" rx="3" fill="url(#task)" stroke="#003f66"/>
<ellipse cx="15" cy="1025" rx="2.500" ry="3.500" fill="#fff"/><ellipse cx="20" cy="1020" rx="2.500" ry="3.500" fill="#fff"/><ellipse cx="27" cy="1019" rx="2.500" ry="3.500" fill="#fff"/><ellipse cx="33" cy="1021" rx="5" ry="3.500" fill="#fff" transform="rotate(-30 33 1021)"/>
<path d="M29 1024Q17 1028 17 1036Q17 1042 24 1046L32 1046Q34 1043 29 1042Q24 1041 25 1036Q26 1030 36 1027Z" fill="#fff"/>
<text x="45" y="1037" textLength="37" class="w">Menü</text>
<circle cx="114" cy="1032" r="15" fill="url(#ff)"/><path d="M121 1015Q131 1026 129 1034L117 1024Q121 1021 121 1015Z" fill="#ffcf30"/><path d="M99 1032Q100 1024 106 1020L108 1028z" fill="#ffb030"/><circle cx="114" cy="1034" r="6.500" fill="#6e3fb0"/>
<rect x="138.500" y="1016.500" width="27" height="29" rx="2" fill="#b4b4b4" stroke="#888"/><rect x="141" y="1019" width="22" height="10" fill="#fff"/><rect x="142" y="1020" width="20" height="3" fill="#e86a2a"/><rect x="142" y="1025" width="20" height="2" fill="#e8b050"/><rect x="148" y="1034" width="9" height="6" fill="#e0e0e0" stroke="#666"/>
<rect x="176" y="1021" width="28" height="23" fill="#222" stroke="#ddd" stroke-width="2"/><path d="M180 1025l5 3-5 3M185 1033h5" fill="none" stroke="#eee" stroke-width="1.300"/>
<rect x="209" y="1012" width="1" height="38" fill="#88aec8"/><rect x="221" y="1012" width="1" height="38" fill="#cfe0ea"/>
<g fill="#6a93ad"><rect x="230" y="1022" width="4" height="4"/><rect x="230" y="1030" width="4" height="4"/><rect x="230" y="1038" width="4" height="4"/></g>
<rect x="237.500" y="1013.500" width="163" height="34" rx="3" fill="url(#task)" stroke="#003f66"/>
<rect x="403.500" y="1013.500" width="164" height="34" rx="3" fill="url(#task)" stroke="#003f66"/>
<rect x="570.500" y="1013.500" width="163" height="34" rx="3" fill="url(#task)" stroke="#003f66"/>
<rect x="737.500" y="1013.500" width="163" height="34" rx="3" fill="url(#task)" stroke="#003f66"/>
<rect x="903.500" y="1013.500" width="163" height="34" rx="3" fill="url(#task)" stroke="#003f66"/>
<rect x="1069.500" y="1013.500" width="164" height="34" rx="3" fill="url(#taskd)" stroke="#003f66"/>
<rect x="241.500" y="1023.500" width="14" height="13" fill="#222" stroke="#ddd"/><path d="M244 1027l3 2-3 2" fill="none" stroke="#eee"/>
<path d="M410 1024h10l2 14q-7 3-15 0z" fill="#4f8fc0" stroke="#3a78a8"/>
<path d="M575 1023l7-3 7 3v10l-7 7-7-7z" fill="#3f7aa8" stroke="#8fb4cc" stroke-dasharray="2 1.500"/>
<rect x="741" y="1022" width="15" height="16" fill="#3a8fd0"/><path d="M741 1022h6v5h-6zM750 1030l3-6M747 1038l2-5" stroke="#cfe4f4" fill="none"/>
<rect x="908" y="1023" width="14" height="11" fill="url(#pu)" stroke="#ddd"/><rect x="907" y="1036" width="16" height="2" fill="#ddd"/>
<rect x="1075" y="1026" width="13" height="11" fill="#e4e4de" stroke="#777"/><rect x="1075" y="1025" width="13" height="2" fill="#5a80b0"/>
<text class="w" x="265" y="1037" textLength="55">Terminal</text>
<text class="w" x="431" y="1037" textLength="76">[Linux_2TB]</text>
<text class="w" x="598" y="1037" textLength="129">[ (als Systemverw...</text>
<text class="w" x="765" y="1037" textLength="127">[ (als Systemverw...</text>
<text class="w" x="931" y="1037" textLength="53">Rechner</text>
<text class="w" x="1097" y="1037" textLength="132">A widget factory - ...</text>
<rect x="1236" y="1012" width="16" height="38" rx="3" fill="#fff"/><path d="M1239 1034l5-5 5 5z" fill="#111"/>
<rect x="1253.500" y="1013.500" width="14" height="34" rx="3" fill="url(#task)" stroke="#003f66"/><rect x="1269.500" y="1013.500" width="14" height="34" rx="3" fill="url(#task)" stroke="#003f66"/><rect x="1285.500" y="1013.500" width="14" height="34" rx="3" fill="url(#task)" stroke="#003f66"/><rect x="1301.500" y="1013.500" width="14" height="34" rx="3" fill="url(#task)" stroke="#003f66"/><rect x="1317.500" y="1013.500" width="14" height="34" rx="3" fill="url(#task)" stroke="#003f66"/>
<text class="w" x="1256" y="1037">È</text><text class="w" x="1272" y="1037">É</text><text class="w" x="1288" y="1037">Ê</text><text class="w" x="1304" y="1037">Ë</text><text class="w" x="1318" y="1037" textLength="13">Æ</text>
<rect x="1335" y="1024" width="11" height="14" fill="#8a8a5c" stroke="#e8d890" stroke-dasharray="2 1"/><rect x="1338" y="1027" width="6" height="7" fill="#c4c4b0"/>
<rect x="1347" y="1022" width="8" height="18" fill="#fff"/><rect x="1347" y="1031" width="8" height="9" fill="#8a80d0"/>
<text class="w" x="1361" y="1037" textLength="55">1,37 GHz</text>
<g fill="#7f9aaa"><rect x="1420" y="1024" width="3" height="4"/><rect x="1420" y="1030" width="3" height="4"/><rect x="1420" y="1036" width="3" height="4"/></g>
<path d="M1430 1028q12-7 24 0l-12 13z" fill="none" stroke="#7c93a4" stroke-width="1.300"/>
<path d="M1459 1027h4l8-7h4v30h-4l-8-7h-4z" fill="url(#sp)"/>
<rect x="1481" y="1028" width="3" height="12" fill="#1f7cb5"/><rect x="1486" y="1025" width="3" height="16" fill="#1b73aa"/>
<rect x="1522" y="1013" width="32" height="37" rx="3" fill="#0078bc" stroke="#003f66"/><rect x="1523" y="1020" width="30" height="25" fill="url(#pu)"/><rect x="1523" y="1020" width="30" height="3" fill="#e8e0c0"/><rect x="1526" y="1028" width="3" height="4" fill="#fff"/><rect x="1526" y="1035" width="3" height="4" fill="#fff"/>
<text class="w" x="1558" y="1037" textLength="118">So, 14. Nov., 08:24</text>
</svg>
</body></html>
